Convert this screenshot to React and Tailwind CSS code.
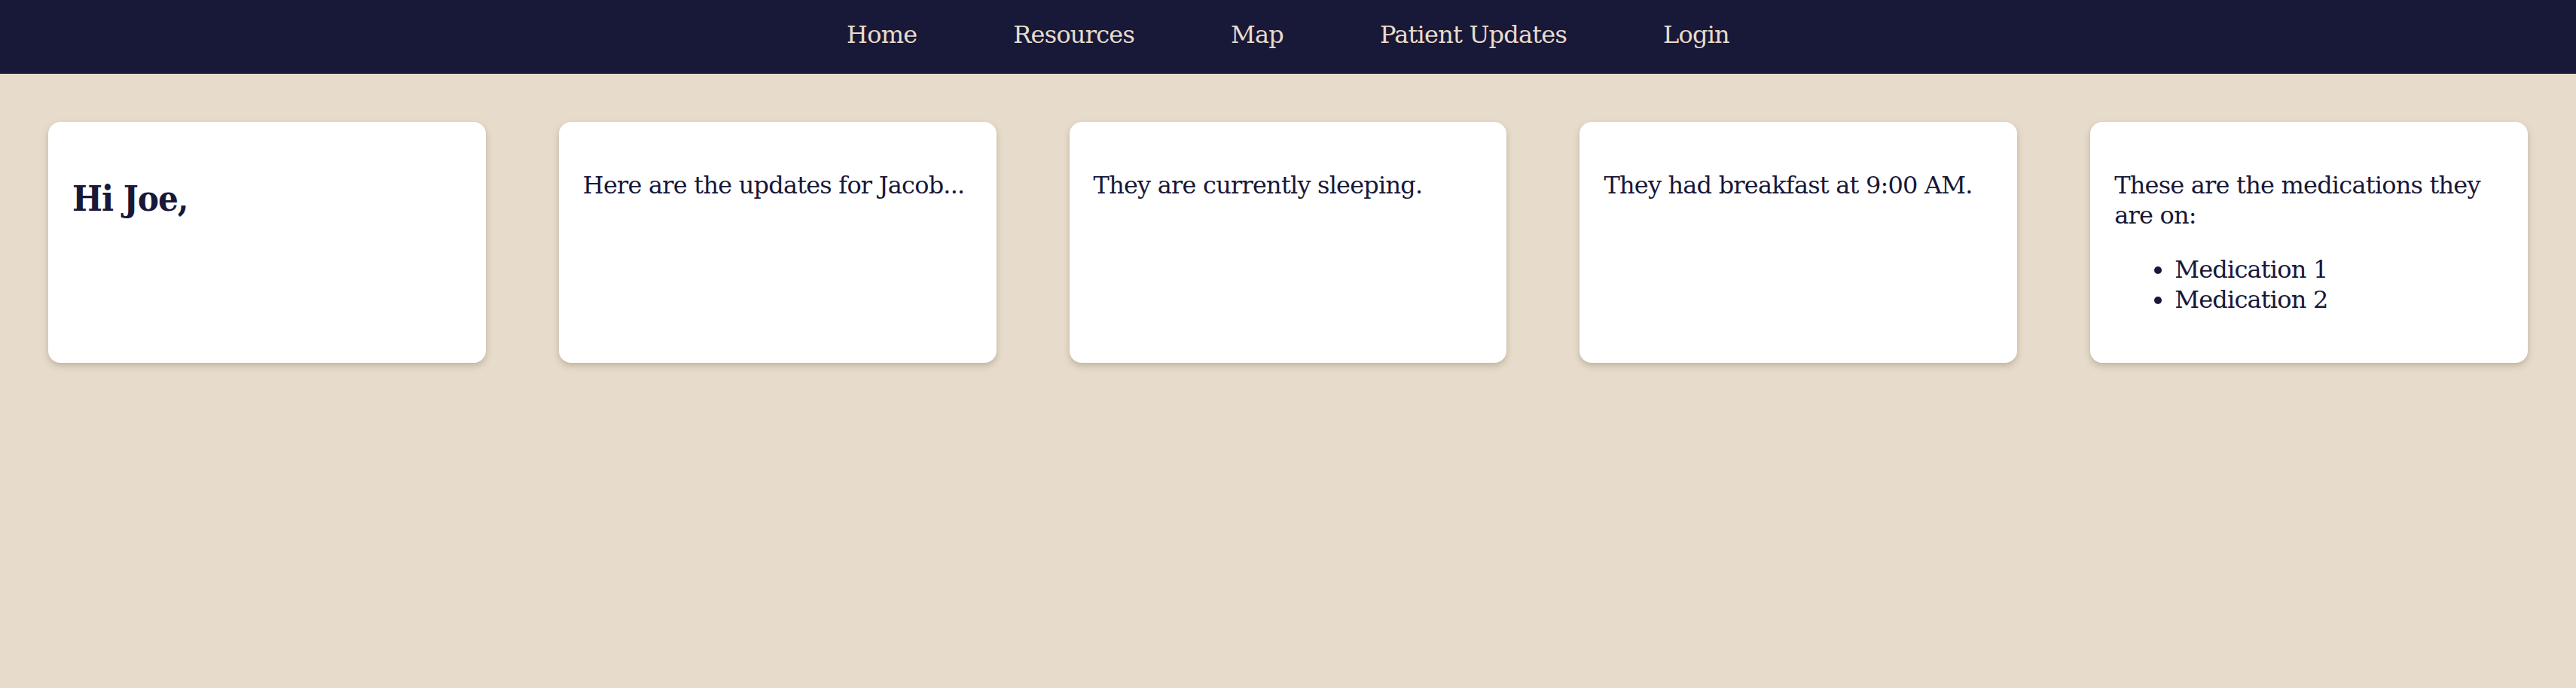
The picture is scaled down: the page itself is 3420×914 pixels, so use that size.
import React from 'react';

const links = ['Home', 'Resources', 'Map', 'Patient Updates', 'Login'];

const Card = ({ children }) => (
  <div className="bg-white rounded-2xl p-8 shadow-[0_4px_8px_rgba(120,100,80,0.35)]">
    {children}
  </div>
);

const App = () => {
  return (
    <div className="min-h-screen bg-[#e7dccb] text-[#181838] font-['DejaVu_Serif',serif] tracking-[-0.8px]">
      <nav className="h-[98px] bg-[#181838] flex justify-center items-center gap-[128px] pb-[6px]">
        {links.map((l) => (
          <a key={l} href="#" className="text-[32px] leading-[40px] text-[#e7dccb]">
            {l}
          </a>
        ))}
      </nav>

      <div className="grid grid-cols-5 gap-[97px] px-16 pt-16">
        <Card>
          <h1 className="mt-10 text-[47px] leading-[60px] font-bold font-stretch-condensed tracking-[-1px]">Hi Joe,</h1>
        </Card>
        <Card>
          <p className="mt-8 text-[32px] leading-[40px]">Here are the updates for Jacob...</p>
        </Card>
        <Card>
          <p className="mt-8 text-[32px] leading-[40px]">They are currently sleeping.</p>
        </Card>
        <Card>
          <p className="mt-8 text-[32px] leading-[40px]">They had breakfast at 9:00 AM.</p>
        </Card>
        <Card>
          <p className="mt-8 text-[32px] leading-[40px]">These are the medications they are on:</p>
          <ul className="list-disc pl-20 my-8 text-[32px] leading-[40px]">
            <li>Medication 1</li>
            <li>Medication 2</li>
          </ul>
        </Card>
      </div>
    </div>
  );
};

export default App;
